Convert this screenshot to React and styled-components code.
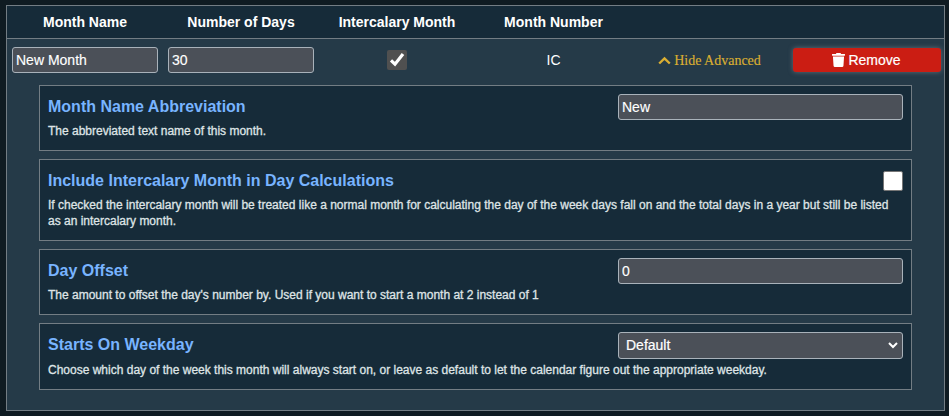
import React from "react";
import styled, { createGlobalStyle } from "styled-components";

const GlobalStyle = createGlobalStyle`
  *, *::before, *::after { box-sizing: border-box; }
  html, body { height: 100%; }
  body {
    margin: 0;
    background: #0f1b22;
    color: #fff;
    font: 14px/16px "Liberation Sans", Arial, sans-serif;
    overflow: hidden;
  }
`;

const Page = styled.main`
  width: 949px;
  height: 416px;
  padding: 5px 4px 5px 6px;
`;

const Table = styled.section`
  height: 406px;
  border: 1px solid #737d84;
  background: #253a48;
`;

const Row = styled.div`
  display: grid;
  grid-template-columns: 156px 156px 156px 157px 156px 158px;
  align-items: center;
  height: ${(p) => (p.$header ? "33px" : "42px")};
  background: ${(p) => (p.$header ? "#162b39" : "transparent")};
  border-bottom: ${(p) => (p.$header ? "1px solid #737d84" : "0")};
  font-weight: ${(p) => (p.$header ? "bold" : "normal")};
  text-align: center;
`;

const Cell = styled.div`
  display: flex;
  justify-content: center;
  align-items: center;
  padding: 0 5px;
`;

const TextInput = styled.input`
  display: block;
  flex: none;
  width: ${(p) => p.$width};
  height: 26px;
  margin: 0;
  padding: 1px 3px;
  border: 1px solid #a9b2ba;
  border-radius: 3px;
  background: #4b5058;
  color: #fff;
  font: 14px "Liberation Sans", Arial, sans-serif;
  outline: none;
  -webkit-text-stroke: 0.15px;
`;

const Select = styled.div`
  display: flex;
  flex: none;
  align-items: center;
  justify-content: space-between;
  width: 285px;
  height: 27px;
  padding: 0 4px 1px 7px;
  border: 1px solid #a9b2ba;
  border-radius: 3px;
  background: #4b5058;
  color: #fff;
  -webkit-text-stroke: 0.2px;
`;

const CheckBox = styled.span`
  display: flex;
  flex: none;
  width: 20px;
  height: 20px;
  margin-top: ${(p) => (p.$checked ? "0" : "3px")};
  border: ${(p) => (p.$checked ? "0" : "1px solid #767676")};
  border-radius: 2px;
  background: ${(p) => (p.$checked ? "#505050" : "#fff")};
`;

const AdvancedToggle = styled.a`
  display: flex;
  align-items: center;
  gap: 3px;
  padding: 1px 1px 0 0;
  color: #daae32;
  font: 14px/16px "Liberation Serif", "Times New Roman", serif;
  -webkit-text-stroke: 0.15px;
`;

const RemoveButton = styled.button`
  display: flex;
  align-items: center;
  justify-content: center;
  gap: 3px;
  width: 148px;
  height: 24px;
  padding: 0 1px 0 0;
  border: 0;
  border-radius: 3px;
  background: #cb1d13;
  box-shadow: 0 0 5px rgba(145, 155, 160, 0.55);
  color: #fff;
  font: 14px/16px "Liberation Sans", Arial, sans-serif;
  -webkit-text-stroke: 0.2px;
`;

const Advanced = styled.div`
  display: flex;
  flex-direction: column;
  gap: 8px;
  width: 873px;
  margin: 4px 0 0 32px;
`;

const Card = styled.article`
  height: ${(p) => p.$height};
  padding: 8px;
  border: 1px solid #737d84;
  background: #162b39;
`;

const CardTop = styled.div`
  display: flex;
  align-items: flex-start;
  justify-content: space-between;
  height: ${(p) => p.$height || "29px"};
`;

const Title = styled.h3`
  margin: 4px 0 0;
  color: #78b4ff;
  font-size: 16px;
  line-height: 18px;
`;

const Description = styled.p`
  margin: 0;
  color: #dfe4e6;
  font-size: 12px;
  line-height: 16px;
  -webkit-text-stroke: 0.3px;
`;

function Setting({ title, height, topHeight, control, children }) {
  return (
    <Card $height={height}>
      <CardTop $height={topHeight}>
        <Title>{title}</Title>
        {control}
      </CardTop>
      <Description>{children}</Description>
    </Card>
  );
}

export default function App() {
  return (
    <>
      <GlobalStyle />
      <Page>
        <Table>
          <Row $header>
            <Cell>Month Name</Cell>
            <Cell>Number of Days</Cell>
            <Cell>Intercalary Month</Cell>
            <Cell>Month Number</Cell>
          </Row>
          <Row>
            <Cell><TextInput $width="146px" defaultValue="New Month" /></Cell>
            <Cell><TextInput $width="146px" defaultValue="30" /></Cell>
            <Cell>
              <CheckBox $checked>
                <svg width="20" height="20" viewBox="0 0 20 20">
                  <path d="M4 10.300 8 14.200 16 4" fill="none" stroke="#fff" strokeWidth="3.200" />
                </svg>
              </CheckBox>
            </Cell>
            <Cell>IC</Cell>
            <Cell>
              <AdvancedToggle>
                <svg width="13" height="14" viewBox="0 0 13 14">
                  <path d="M1.200 9.500 6.500 4.500l5.300 5" fill="none" stroke="currentColor" strokeWidth="2.400" />
                </svg>
                Hide Advanced
              </AdvancedToggle>
            </Cell>
            <Cell>
              <RemoveButton>
                <svg width="13" height="14" viewBox="0 0 448 512" preserveAspectRatio="none" fill="currentColor">
                  <path d="M432 32H312l-9.400-18.700A24 24 0 0 0 281.100 0H166.800a23.700 23.700 0 0 0-21.400 13.300L136 32H16A16 16 0 0 0 0 48v32a16 16 0 0 0 16 16h416a16 16 0 0 0 16-16V48a16 16 0 0 0-16-16zM53.200 467a48 48 0 0 0 47.900 45h245.800a48 48 0 0 0 47.900-45L416 128H32z" />
                </svg>
                Remove
              </RemoveButton>
            </Cell>
          </Row>
          <Advanced>
            <Setting title="Month Name Abbreviation" height="66px" control={<TextInput $width="285px" defaultValue="New" />}>
              The abbreviated text name of this month.
            </Setting>
            <Setting title="Include Intercalary Month in Day Calculations" height="82px" control={<CheckBox />}>
              If checked the intercalary month will be treated like a normal month for calculating the day of the week days fall on and the total days in a year but still be listed as an intercalary month.
            </Setting>
            <Setting title="Day Offset" height="66px" control={<TextInput $width="285px" defaultValue="0" />}>
              The amount to offset the day's number by. Used if you want to start a month at 2 instead of 1
            </Setting>
            <Setting
              title="Starts On Weekday"
              height="67px"
              topHeight="30px"
              control={
                <Select>
                  Default
                  <svg width="10" height="8" viewBox="0 0 10 8">
                    <path d="M1 2l4 4 4-4" fill="none" stroke="#fff" strokeWidth="2" />
                  </svg>
                </Select>
              }
            >
              Choose which day of the week this month will always start on, or leave as default to let the calendar figure out the appropriate weekday.
            </Setting>
          </Advanced>
        </Table>
      </Page>
    </>
  );
}
